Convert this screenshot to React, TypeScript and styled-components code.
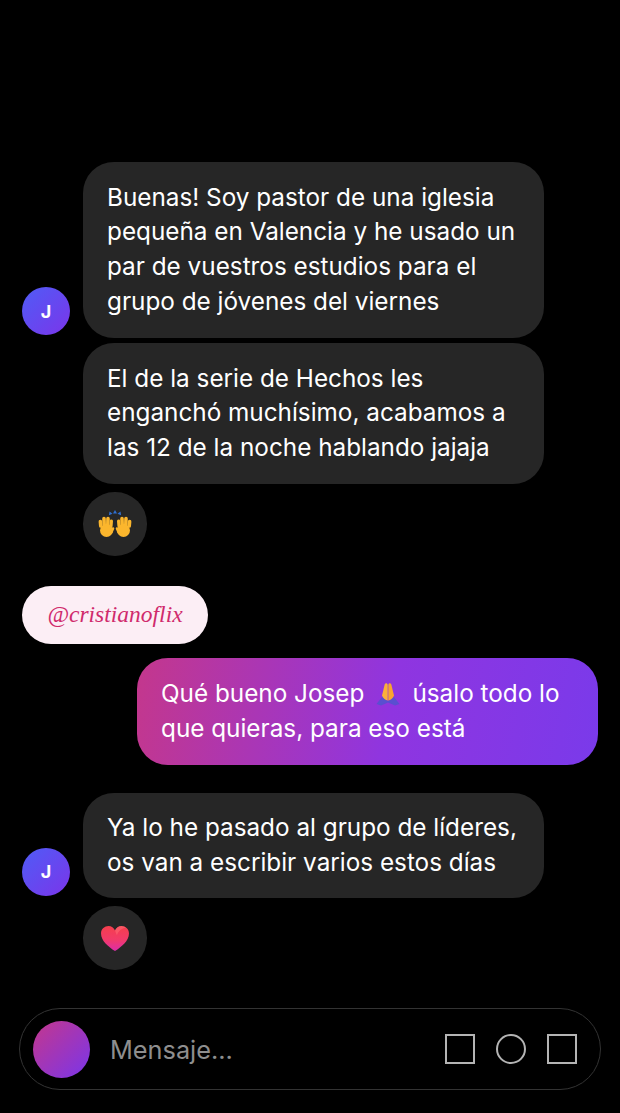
import React from "react";
import styled, { createGlobalStyle } from "styled-components";

const GlobalStyle = createGlobalStyle`
	html, body {
		margin: 0;
		background: #000;
	}
	* {
		box-sizing: border-box;
	}
`;

const Screen = styled.div`
	width: 620px;
	height: 1113px;
	background: #000;
	font-family: Inter, "Liberation Sans", sans-serif;
	color: #fff;
	padding: 162px 22px 0;
	display: flex;
	flex-direction: column;
	overflow: hidden;
`;
const Group = styled.div<{ $top?: number }>`
	display: flex;
	align-items: flex-end;
	gap: 13px;
	flex-shrink: 0;
	margin-top: ${(p) => p.$top ?? 0}px;
`;
const Avatar = styled.div`
	width: 48px;
	height: 48px;
	flex-shrink: 0;
	margin-bottom: 2.6px;
	border-radius: 50%;
	background: linear-gradient(135deg, #4f5cf6, #7b35ea);
	display: flex;
	align-items: center;
	justify-content: center;
	font-size: 18px;
	font-weight: 700;
`;
const Bubble = styled.div`
	width: 461px;
	flex-shrink: 0;
	padding: 17.5px 24px 18.5px;
	border-radius: 31px;
	background: #262626;
	font-size: 24.3px;
	line-height: 34.9px;
	white-space: nowrap;
`;
const NextBubble = styled(Bubble)`
	margin: 5.4px 0 0 61px;
	padding-bottom: 19px;
`;
const SentBubble = styled(Bubble)`
	align-self: flex-end;
	margin-top: 14px;
	padding-top: 18.2px;
	padding-bottom: 18.8px;
	background: linear-gradient(100deg, #c4378c 0%, #8f35e0 55%, #7a3aea 100%);
`;
const Reaction = styled.div`
	width: 63.5px;
	height: 63.5px;
	flex-shrink: 0;
	margin: 8px 0 0 61px;
	border-radius: 50%;
	background: #262626;
	display: flex;
	align-items: center;
	justify-content: center;
`;
const Tag = styled.div`
	width: 186px;
	height: 58px;
	flex-shrink: 0;
	margin-top: 30px;
	border-radius: 29px;
	background: #fceef5;
	color: #d02a6c;
	display: flex;
	align-items: center;
	justify-content: center;
	font-family: "Liberation Serif", serif;
	font-style: italic;
	font-size: 23.5px;
`;
const InputBar = styled.div`
	width: 582px;
	height: 82px;
	flex-shrink: 0;
	margin: 38px 0 0 -3px;
	padding: 0 23px 0 13px;
	border: 1.5px solid #333;
	border-radius: 41px;
	display: flex;
	align-items: center;
`;
const CameraDot = styled.div`
	width: 57px;
	height: 57px;
	margin-top: 2px;
	border-radius: 50%;
	background: linear-gradient(135deg, #c4378c, #7a35ea);
`;
const Placeholder = styled.div`
	flex: 1;
	margin: 2px 0 0 20px;
	color: #8e8e8e;
	font-size: 25.3px;
`;
const ToolIcons = styled.div`
	display: flex;
	align-items: center;
	gap: 21px;
`;
const ToolIcon = styled.div<{ $round?: boolean }>`
	width: 30px;
	height: 30px;
	border: 2px solid #b4b4b4;
	border-radius: ${(p) => (p.$round ? "50%" : "0")};
`;
const InlineEmoji = styled.svg`
	width: 25px;
	height: 25px;
	margin: 0 11px 0 12px;
	vertical-align: -5px;
`;

const Hand = ({ flip }: { flip?: boolean }) => (
	<g transform={flip ? "translate(34 0) scale(-1 1)" : undefined} stroke="#fbb62d" strokeLinecap="round">
		<path d="M8.5 20.5h0" strokeWidth="13" />
		<path d="M2.8 16L2.4 11.5" strokeWidth="3.6" />
		<path d="M6.2 15L6 8.6" strokeWidth="3.6" />
		<path d="M9.8 15L10 8.6" strokeWidth="3.6" />
		<path d="M13 16L13.4 11" strokeWidth="3.2" />
		<path d="M13.5 22L15 18.5" strokeWidth="2.6" />
	</g>
);

const RaisedHands = () => (
	<svg width="34" height="27" viewBox="0 0 34 27">
		<Hand />
		<Hand flip />
		<path d="M17 0l2 3.500h-4zM11.500 1.500l3 2.200-3.600 1.600zM22.500 1.500l-3 2.200 3.600 1.600z" fill="#2f6fd0" />
	</svg>
);

const PrayingHands = () => (
	<InlineEmoji viewBox="0 0 25 25">
		<path d="M0.5 22l5.500-7 6 4 6-4 5.500 7-4.500 1.500-7-3-7 3z" fill="#5a4fd0" />
		<path d="M11.700 18.500V3c0-2-2.400-2.400-3-.6L6 13.500c1.200 3 3.500 4.500 5.700 5z" fill="#fbb03a" />
		<path d="M12.300 18.500V3c0-2 2.400-2.400 3-.6L18 13.500c-1.200 3-3.500 4.500-5.700 5z" fill="#f9a52f" />
	</InlineEmoji>
);

const Heart = () => (
	<svg width="30" height="27" viewBox="0 0 32 29">
		<defs>
			<linearGradient id="heartFill" x1="0" y1="0" x2="0" y2="1">
				<stop offset="0" stopColor="#f53f4c" />
				<stop offset="0.55" stopColor="#f23a6a" />
				<stop offset="1" stopColor="#dc2cab" />
			</linearGradient>
		</defs>
		<path
			d="M16 28C9 23 1 17 1 9c0-5 4-8 8-8 3 0 6 2 7 5 1-3 4-5 7-5 4 0 8 3 8 8 0 8-8 14-15 19z"
			fill="url(#heartFill)"
		/>
		<path d="M16 6c1-3 4-5 7-5 2 0 4 1 5 2-4 0-8 3-10 8z" fill="#ff6f78" opacity="0.5" />
	</svg>
);

const App = () => {
	return (
		<Screen>
			<GlobalStyle />
			<Group>
				<Avatar>J</Avatar>
				<Bubble>
					Buenas! Soy pastor de una iglesia
					<br />
					pequeña en Valencia y he usado un
					<br />
					par de vuestros estudios para el
					<br />
					grupo de jóvenes del viernes
				</Bubble>
			</Group>
			<NextBubble>
				El de la serie de Hechos les
				<br />
				enganchó muchísimo, acabamos a
				<br />
				las 12 de la noche hablando jajaja
			</NextBubble>
			<Reaction>
				<RaisedHands />
			</Reaction>
			<Tag>@cristianoflix</Tag>
			<SentBubble>
				Qué bueno Josep
				<PrayingHands />
				úsalo todo lo
				<br />
				que quieras, para eso está
			</SentBubble>
			<Group $top={28}>
				<Avatar>J</Avatar>
				<Bubble>
					Ya lo he pasado al grupo de líderes,
					<br />
					os van a escribir varios estos días
				</Bubble>
			</Group>
			<Reaction>
				<Heart />
			</Reaction>
			<InputBar>
				<CameraDot />
				<Placeholder>Mensaje...</Placeholder>
				<ToolIcons>
					<ToolIcon />
					<ToolIcon $round />
					<ToolIcon />
				</ToolIcons>
			</InputBar>
		</Screen>
	);
};

export default App;
